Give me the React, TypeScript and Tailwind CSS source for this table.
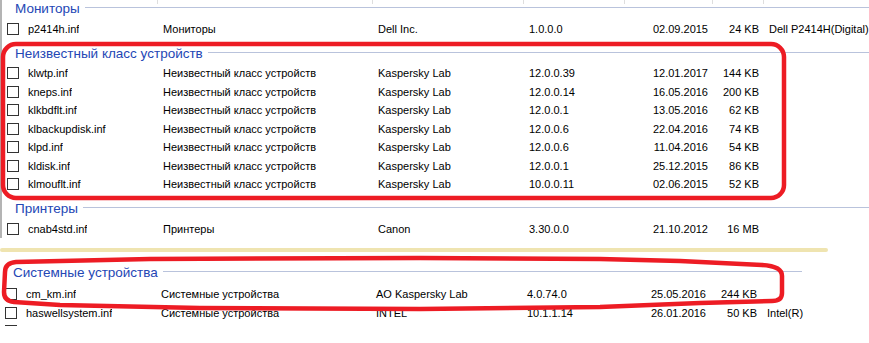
import React from 'react';

type Row = {
  name: string;
  cls: string;
  vendor: string;
  ver: string;
  date: string;
  size: string;
  desc?: string;
};

const FONT = { fontFamily: '"Liberation Sans", Arial, sans-serif' };

const cols = 'grid grid-cols-[156px_215px_151px_101px_88px_51px_1fr]';

const unknownCls = 'Неизвестный класс устройств';

const unknownRows: Row[] = [
  { name: 'klwtp.inf', cls: unknownCls, vendor: 'Kaspersky Lab', ver: '12.0.0.39', date: '12.01.2017', size: '144 KB' },
  { name: 'kneps.inf', cls: unknownCls, vendor: 'Kaspersky Lab', ver: '12.0.0.14', date: '16.05.2016', size: '200 KB' },
  { name: 'klkbdflt.inf', cls: unknownCls, vendor: 'Kaspersky Lab', ver: '12.0.0.1', date: '13.05.2016', size: '62 KB' },
  { name: 'klbackupdisk.inf', cls: unknownCls, vendor: 'Kaspersky Lab', ver: '12.0.0.6', date: '22.04.2016', size: '74 KB' },
  { name: 'klpd.inf', cls: unknownCls, vendor: 'Kaspersky Lab', ver: '12.0.0.6', date: '11.04.2016', size: '54 KB' },
  { name: 'kldisk.inf', cls: unknownCls, vendor: 'Kaspersky Lab', ver: '12.0.0.1', date: '25.12.2015', size: '86 KB' },
  { name: 'klmouflt.inf', cls: unknownCls, vendor: 'Kaspersky Lab', ver: '10.0.0.11', date: '02.06.2015', size: '52 KB' },
];

const systemRows: Row[] = [
  { name: 'cm_km.inf', cls: 'Системные устройства', vendor: 'AO Kaspersky Lab', ver: '4.0.74.0', date: '25.05.2016', size: '244 KB' },
  { name: 'haswellsystem.inf', cls: 'Системные устройства', vendor: 'INTEL', ver: '10.1.1.14', date: '26.01.2016', size: '50 KB', desc: 'Intel(R)' },
  { name: 'lynxpointsystem.inf', cls: 'Системные устройства', vendor: 'INTEL', ver: '10.1.1.14', date: '26.01.2016', size: '50 KB', desc: 'Intel(R)' },
];

const FileRow = ({ r }: { r: Row }) => (
  <div className={`${cols} h-[18.5px] items-center text-[11px] leading-[14px] text-black whitespace-nowrap`}>
    <div className="flex items-center pl-[5px] gap-[9px] overflow-hidden">
      <span className="w-[12px] h-[12px] border border-[#333] bg-white shrink-0" />
      <span className="truncate">{r.name}</span>
    </div>
    <div className="pl-[5px] overflow-hidden">{r.cls}</div>
    <div className="pl-[5px] overflow-hidden">{r.vendor}</div>
    <div className="pl-[5px] overflow-hidden">{r.ver}</div>
    <div className="pr-[5px] text-right">{r.date}</div>
    <div className="pr-[5px] text-right">{r.size}</div>
    <div className="pl-[5px]">{r.desc}</div>
  </div>
);

const GroupHeader = ({ title, className }: { title: string; className: string }) => (
  <div className={className}>
    <div className="flex items-center h-[16px] gap-[5px]">
      <span className="text-[13.5px] leading-[16px] text-[#2447b5] whitespace-nowrap">{title}</span>
      <div className="flex-1 h-px bg-[#b9c3dc] -mt-[3px]" />
    </div>
  </div>
);

export default function App() {
  return (
    <div className="relative w-[869px] h-[343px] overflow-hidden bg-white" style={FONT}>
      <div className="border-l-2 border-[#b4b4b4]">
        {/* column header bottom edge */}
        <div className={`${cols} h-[4px]`}>
          <div className="border-r border-[#dedede]" />
          <div className="border-r border-[#dedede]" />
          <div className="border-r border-[#dedede]" />
          <div className="border-r border-[#dedede]" />
          <div className="border-r border-[#dedede]" />
          <div className="border-r border-[#dedede]" />
          <div />
        </div>

        <GroupHeader title="Мониторы" className="-mt-[3px] h-[18.75px] pl-[13px]" />
        <FileRow r={{ name: 'p2414h.inf', cls: 'Мониторы', vendor: 'Dell Inc.', ver: '1.0.0.0', date: '02.09.2015', size: '24 KB', desc: 'Dell P2414H(Digital)' }} />

        <GroupHeader title={unknownCls} className="h-[25.5px] pt-[8px] pl-[13px]" />
        {unknownRows.map((r) => (
          <FileRow key={r.name} r={r} />
        ))}

        <GroupHeader title="Принтеры" className="h-[26.5px] pt-[8px] pl-[13px]" />
        <FileRow r={{ name: 'cnab4std.inf', cls: 'Принтеры', vendor: 'Canon', ver: '3.30.0.0', date: '21.10.2012', size: '16 MB' }} />
      </div>

      {/* marker stroke between the two screenshots */}
      <div className="mt-[9.75px] h-[4px] w-[828px] rounded-full bg-[#efe4b0]" />

      <div className="mt-[4px] h-[70px] w-[808px] overflow-hidden">
        <GroupHeader title="Системные устройства" className="h-[28.75px] pt-[9px] pl-[13px] pr-[6px]" />
        {systemRows.map((r) => (
          <FileRow key={r.name} r={r} />
        ))}
      </div>

      {/* red hand-drawn annotations */}
      <svg className="absolute inset-0 pointer-events-none" width="869" height="343" viewBox="0 0 869 343">
        <rect x="3" y="44" width="781" height="154" rx="13" fill="none" stroke="#ed1c24" strokeWidth="4.5" />
        <path
          d="M 5 272 Q 5 263 16 262 L 150 259 L 420 258 L 600 259 L 680 261 L 762 265 Q 782 266 782 276 L 782 293 Q 782 301 772 301 L 700 303 L 600 307 L 420 309 L 200 308 L 60 305 L 14 302 Q 4 301 4 292 Z"
          fill="none"
          stroke="#ed1c24"
          strokeWidth="4.5"
          strokeLinejoin="round"
        />
      </svg>
    </div>
  );
}
